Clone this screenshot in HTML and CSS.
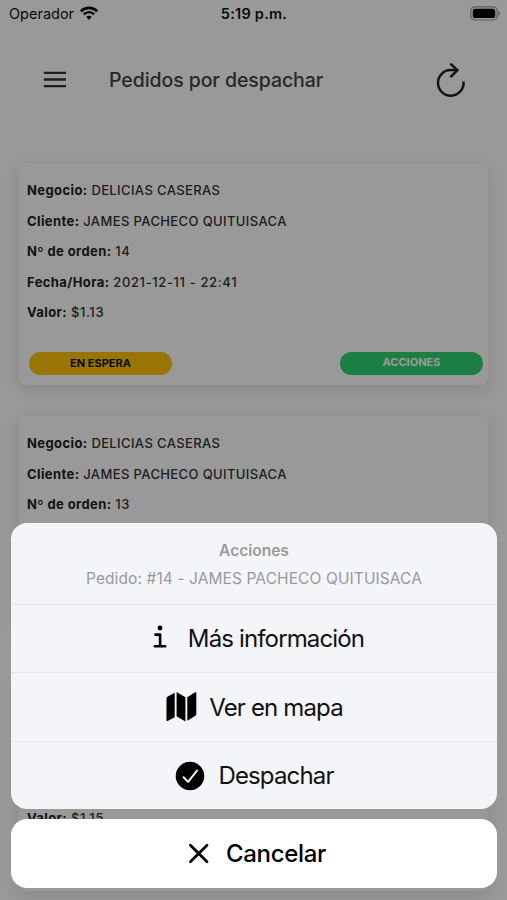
FILE: index.html
```html
<!DOCTYPE html>
<html lang="es">
<head>
    <meta charset="UTF-8">
    <meta name="viewport" content="width=device-width, initial-scale=1.0">
    <title>Pedidos por despachar</title>
    <link rel="stylesheet" href="styles.css">
</head>
<body>
    <div class="app">
        <div class="status-bar">
            <div class="carrier">
                <span>Operador</span>
                <svg class="wifi" viewBox="0 0 18 14" width="18" height="14">
                    <path d="M.9 5.300a11.400 11.400 0 0 1 16.200 0" fill="none" stroke="#000" stroke-width="2.600"/>
                    <path d="M3.800 8.400a7.300 7.300 0 0 1 10.400 0" fill="none" stroke="#000" stroke-width="2.300"/>
                    <path d="M9 13.700L6.300 11a3.900 3.900 0 0 1 5.400 0z"/>
                </svg>
            </div>
            <span class="time">5:19 p.m.</span>
            <svg class="battery" viewBox="0 0 31 15" width="31" height="15">
                <rect x=".8" y=".8" width="26.4" height="13.2" rx="4" fill="none" stroke="#000" stroke-opacity=".4" stroke-width="1.2"/>
                <rect x="2.8" y="2.7" width="22.4" height="9.4" rx="2.2"/>
                <path d="M28.600 5v5c1.600-.6 1.800-4.400 0-5z" fill-opacity=".45"/>
            </svg>
        </div>
        <header class="toolbar">
            <svg class="menu-icon" viewBox="0 0 24 18" width="24" height="18">
                <path d="M.8 1.800h22.200M.8 8.500h22.200M.8 15.200h22.200" stroke="#333" stroke-width="2.300"/>
            </svg>
            <h1>Pedidos por despachar</h1>
            <svg class="refresh-icon" viewBox="0 0 30 34" width="30" height="34">
                <path d="M27.600 19.500a12.800 12.800 0 1 1-12.800-12.400h6.600" fill="none" stroke="#222" stroke-width="2.500" stroke-linecap="round"/>
                <path d="M15.200 1.400l6.200 5.800-6.200 6.200" fill="none" stroke="#222" stroke-width="2.500" stroke-linecap="round" stroke-linejoin="round"/>
            </svg>
        </header>
        <main class="orders">
            <div class="card">
                <p><b>Negocio:</b> DELICIAS CASERAS</p>
                <p><b>Cliente:</b> JAMES PACHECO QUITUISACA</p>
                <p><b>Nº de orden:</b> <span class="number">14</span></p>
                <p><b>Fecha/Hora:</b> <span class="number">2021-12-11 - 22:41</span></p>
                <p><b>Valor:</b> <span class="number">$1.13</span></p>
                <div class="card-footer">
                    <span class="pill pill-warning">EN ESPERA</span>
                    <button class="pill pill-success">ACCIONES</button>
                </div>
            </div>
            <div class="card">
                <p><b>Negocio:</b> DELICIAS CASERAS</p>
                <p><b>Cliente:</b> JAMES PACHECO QUITUISACA</p>
                <p><b>Nº de orden:</b> <span class="number">13</span></p>
            </div>
            <div class="card card-end">
                <p><b>Valor:</b> <span class="number">$1.15</span></p>
                <div class="card-footer"></div>
            </div>
        </main>

        <div class="backdrop"></div>
        <div class="action-sheet">
            <div class="sheet-group">
                <div class="sheet-title">
                    <h2>Acciones</h2>
                    <p>Pedido: #14 - JAMES PACHECO QUITUISACA</p>
                </div>
                <button class="sheet-button">
                    <svg class="info-icon" viewBox="0 0 32 32" width="32" height="32">
                        <circle cx="16" cy="6" r="2.400"/>
                        <path d="M11.400 12.600h4.700v11.600M10.800 24.300h10.400" fill="none" stroke="#000" stroke-width="2.600" stroke-linecap="round" stroke-linejoin="round"/>
                    </svg>
                    <span>Más información</span>
                </button>
                <button class="sheet-button">
                    <svg class="map-icon" viewBox="0 0 32 32" width="32" height="32">
                        <path d="M9.700 1.700v24.600l-7.100 3.600c-.6.300-1.100 0-1.100-.7V7.500c0-.8.300-1.400.9-1.800z"/>
                        <path d="M11.600 1.100l8.800 5.200v24.200l-8.800-5.200z"/>
                        <path d="M22.300 6.300l7.500-4.700c.8-.5 1.500-.2 1.500.7v20.800c0 .8-.4 1.300-1 1.700l-8 5z"/>
                    </svg>
                    <span>Ver en mapa</span>
                </button>
                <button class="sheet-button">
                    <svg class="check-icon" viewBox="0 0 32 32" width="32" height="32">
                        <circle cx="16" cy="16" r="14.300"/>
                        <path d="M9.500 17.200l4.600 4.700 9-11.400" fill="none" stroke="#f4f5f9" stroke-width="2" stroke-linecap="round" stroke-linejoin="round"/>
                    </svg>
                    <span>Despachar</span>
                </button>
            </div>
            <button class="sheet-button sheet-cancel">
                <svg class="close-icon" viewBox="0 0 32 32" width="32" height="32">
                    <path d="M8.400 8.200l16.600 16.600M25 8.200L8.400 24.800" stroke="#000" stroke-width="2.800" stroke-linecap="round"/>
                </svg>
                <span>Cancelar</span>
            </button>
        </div>
    </div>
</body>
</html>
```

FILE: styles.css
```css
* {
    box-sizing: border-box;
}
body {
    margin: 0;
    font-family: Inter, "Liberation Sans", sans-serif;
    background-color: #fff;
}
h1, h2, p {
    margin: 0;
}
button {
    border: none;
    padding: 0;
    font-family: inherit;
    cursor: pointer;
}
.app {
    position: relative;
    width: 507px;
    height: 900px;
    overflow: hidden;
}
.status-bar {
    display: grid;
    grid-template-columns: 1fr auto 1fr;
    align-items: center;
    height: 27px;
    padding: 0 6px 0 7px;
    font-size: 14.5px;
    color: #111;
}
.carrier {
    display: flex;
    align-items: center;
    gap: 6px;
    padding-left: 2px;
}
.wifi {
    margin-top: -2px;
}
.time {
    font-weight: 600;
    letter-spacing: 0.25px;
}
.battery {
    justify-self: end;
}
.toolbar {
    display: flex;
    align-items: center;
    height: 106px;
    padding: 0 41px 0 43px;
}
.toolbar h1 {
    flex: 1;
    margin-left: 42px;
    font-size: 19.5px;
    font-weight: 500;
    letter-spacing: -0.08px;
    color: #444;
}
.orders {
    display: flex;
    flex-direction: column;
    gap: 31px;
    padding: 30px 19px 0;
}
.card {
    flex: none;
    display: flex;
    flex-direction: column;
    height: 222px;
    padding: 12px 5px 10px 8px;
    border-radius: 8px;
    background-color: #fff;
    box-shadow: 0 4px 16px rgba(0, 0, 0, 0.12);
}
.card p {
    font-size: 13px;
    font-weight: 500;
    line-height: 30.6px;
    letter-spacing: 0.38px;
    color: #333;
}
.card b {
    font-weight: 700;
    letter-spacing: 0.4px;
    color: #222;
}
.card .number {
    letter-spacing: 0.63px;
}
.card-end {
    justify-content: flex-end;
}
.card-footer {
    display: flex;
    justify-content: space-between;
    height: 23px;
    margin: auto 0 0 2px;
}
.card-end .card-footer {
    margin-top: 24px;
}
.pill {
    width: 143px;
    height: 23px;
    border-radius: 12px;
    font-size: 11px;
    font-weight: 700;
    line-height: 22px;
    text-align: center;
}
.pill-warning {
    background-color: #ffc409;
    color: #111;
}
.pill-success {
    padding-bottom: 2px;
    background-color: #2dd36f;
    line-height: 21px;
    color: #fff;
}
.backdrop {
    position: absolute;
    inset: 0;
    background-color: rgba(0, 0, 0, 0.4);
}
.action-sheet {
    position: absolute;
    left: 11px;
    right: 10px;
    bottom: 12px;
}
.sheet-group {
    margin-bottom: 10px;
    border-radius: 16px;
    background-color: #f4f5f9;
    overflow: hidden;
}
.sheet-title {
    height: 81px;
    padding-top: 17px;
    text-align: center;
    color: #999;
}
.sheet-title h2 {
    font-size: 15.5px;
    font-weight: 600;
    line-height: 21px;
}
.sheet-title p {
    margin-top: 7px;
    font-size: 15.5px;
    line-height: 21px;
    letter-spacing: 0.1px;
}
.sheet-button {
    display: flex;
    align-items: center;
    justify-content: center;
    gap: 12px;
    width: 100%;
    height: 68.6px;
    border-top: 1px solid #e6e7ea;
    background-color: transparent;
    font-size: 24px;
    letter-spacing: -0.85px;
    color: #111;
}
.sheet-cancel {
    padding-bottom: 1px;
    border-top: none;
    border-radius: 16px;
    background-color: #fff;
    font-weight: 500;
    letter-spacing: -0.3px;
    color: #000;
}
```
